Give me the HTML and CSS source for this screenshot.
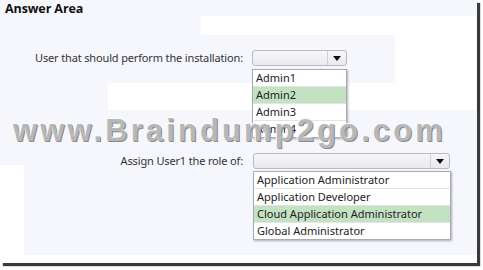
FILE: index.html
```html
<!DOCTYPE html>
<html>
<head>
<meta charset="utf-8">
<link rel="stylesheet" href="styles.css">
</head>
<body>
<div class="frame">
  <div class="patch p1"></div>
  <div class="patch p2"></div>
  <div class="patch p3"></div>
  <div class="patch p4"></div>
  <div class="patch p5"></div>
  <div class="header">Answer Area</div>
  <div class="form">
    <div class="label l1">User that should perform the installation:</div>
    <div class="control">
      <div class="select s1"><span class="arrow"><i></i></span></div>
      <ul class="list">
        <li>Admin1</li>
        <li class="sel">Admin2</li>
        <li>Admin3</li>
        <li>Admin4</li>
      </ul>
    </div>
    <div class="label l2">Assign User1 the role of:</div>
    <div class="control">
      <div class="select s2"><span class="arrow"><i></i></span></div>
      <ul class="list wide">
        <li>Application Administrator</li>
        <li>Application Developer</li>
        <li class="sel">Cloud Application Administrator</li>
        <li>Global Administrator</li>
      </ul>
    </div>
  </div>
  <div class="watermark">www.Braindump2go.com</div>
</div>
</body>
</html>
```
FILE: styles.css
```css
html, body {
  margin: 0;
  padding: 0;
  background: #ffffff;
}
body {
  width: 483px;
  height: 270px;
  overflow: hidden;
  font-family: "Noto Sans", "Open Sans", sans-serif;
  color: #222;
}
.frame {
  position: relative;
  width: 477px;
  height: 263px;
  background: #f6f7fd;
  box-shadow: 3px 3px 1px #3a3a3a;
}
.patch {
  position: absolute;
  background: #ffffff;
  z-index: 0;
}
.p1 { left: 201px; top: 16px; width: 275px; height: 19px; }
.p2 { left: 395px; top: 35px; width: 81px; height: 75px; }
.p3 { left: 108px; top: 83px; width: 287px; height: 27px; }
.p4 { left: 0; top: 165px; width: 24px; height: 98px; }
.p5 { left: 0; top: 255px; width: 477px; height: 8px; }
.header {
  position: relative;
  z-index: 1;
  height: 16px;
  padding-left: 5px;
  font-family: "Open Sans", "Noto Sans", sans-serif;
  font-weight: 700;
  font-size: 12.5px;
  line-height: 17px;
  letter-spacing: -0.1px;
  color: #111;
}
.form {
  position: relative;
  z-index: 1;
  display: grid;
  grid-template-columns: 243px auto;
  column-gap: 9px;
  row-gap: 15px;
  padding-top: 34px;
}
.label {
  text-align: right;
  font-size: 11px;
  line-height: 16px;
  height: 16px;
  color: #333;
  letter-spacing: -0.15px;
}
.control {
  display: flex;
  flex-direction: column;
  align-items: flex-start;
}
.select {
  box-sizing: border-box;
  height: 16px;
  border: 1px solid #b9bac4;
  border-radius: 3px;
  background: linear-gradient(#f7f7f9, #e9e9ee);
  display: flex;
  justify-content: flex-end;
}
.s1 { width: 95px; }
.s2 { width: 197px; margin-left: 1px; }
.arrow {
  width: 18px;
  border-left: 1px solid #cfd0d8;
  display: flex;
  align-items: center;
  justify-content: center;
}
.arrow i {
  width: 0;
  height: 0;
  border-left: 4px solid transparent;
  border-right: 4px solid transparent;
  border-top: 5px solid #111;
}
.list {
  list-style: none;
  margin: 3px 0 0 0;
  padding: 0;
  box-sizing: border-box;
  width: 95px;
  background: #fff;
  border: 1px solid #a9aab4;
  box-shadow: 1px 1px 2px rgba(0, 0, 0, 0.3);
}
.list.wide {
  width: 198px;
  margin-top: 2px;
  margin-left: 1px;
}
.list li {
  height: 16px;
  line-height: 16px;
  padding-left: 3px;
  font-size: 11px;
  color: #222;
  border-bottom: 1px solid #e4e4e8;
}
.list li:last-child { border-bottom: none; }
.list li.sel { background: #c2e2c2; }
.watermark {
  position: absolute;
  z-index: 2;
  left: 13px;
  top: 114px;
  font-family: "Liberation Sans", Arial, sans-serif;
  font-weight: 700;
  font-size: 31px;
  line-height: 34px;
  letter-spacing: 3.1px;
  color: #b7b7b7;
  text-shadow: -1px -1px 0 #fafafa, 1px 1px 0 #8a8a8a;
  white-space: nowrap;
}
```
